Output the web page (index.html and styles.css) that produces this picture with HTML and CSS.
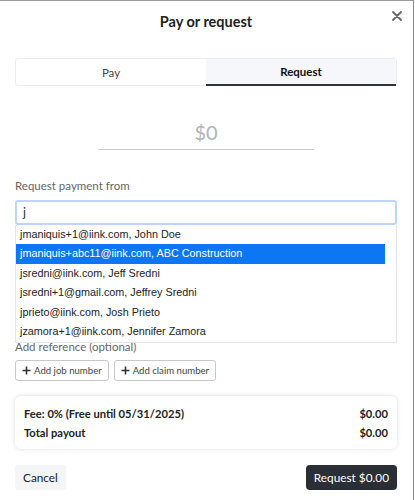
FILE: index.html
```html
<!DOCTYPE html>
<html>
<head>
<meta charset="utf-8">
<link rel="stylesheet" href="styles.css">
</head>
<body>
<div class="modal">
  <header class="head">
    <h1 class="title">Pay or request</h1>
    <button class="close" aria-label="Close">
      <svg width="10" height="10" viewBox="0 0 10 10"><path d="M1 1L9 9M9 1L1 9" stroke="#666" stroke-width="1.8" stroke-linecap="round"/></svg>
    </button>
  </header>
  <div class="tabs">
    <div class="tab">Pay</div>
    <div class="tab active">Request</div>
  </div>
  <div class="amount-wrap">
    <div class="amount">$0</div>
  </div>
  <div class="field">
    <div class="label">Request payment from</div>
    <div class="combo">
      <div class="input">j</div>
      <ul class="list">
        <li>jmaniquis+1@iink.com, John Doe</li>
        <li class="sel">jmaniquis+abc11@iink.com, ABC Construction</li>
        <li>jsredni@iink.com, Jeff Sredni</li>
        <li>jsredni+1@gmail.com, Jeffrey Sredni</li>
        <li>jprieto@iink.com, Josh Prieto</li>
        <li>jzamora+1@iink.com, Jennifer Zamora</li>
      </ul>
    </div>
  </div>
  <div class="ref">
    <div class="label ref-label">Add reference (optional)</div>
    <div class="ref-btns">
      <button class="ref-btn"><svg width="9" height="9" viewBox="0 0 9 9"><path d="M4.5 0.5V8.5M0.5 4.5H8.5" stroke="#333" stroke-width="1.6"/></svg>Add job number</button>
      <button class="ref-btn"><svg width="9" height="9" viewBox="0 0 9 9"><path d="M4.5 0.5V8.5M0.5 4.5H8.5" stroke="#333" stroke-width="1.6"/></svg>Add claim number</button>
    </div>
  </div>
  <div class="card">
    <div class="row"><span>Fee: 0% (Free until 05/31/2025)</span><span>$0.00</span></div>
    <div class="row"><span>Total payout</span><span>$0.00</span></div>
  </div>
  <footer class="foot">
    <button class="btn cancel">Cancel</button>
    <button class="btn primary">Request $0.00</button>
  </footer>
</div>
</body>
</html>
```
FILE: styles.css
```css
* { box-sizing: border-box; }
html, body { margin: 0; padding: 0; background: #fff; }
body { font-family: Lato, "Open Sans", sans-serif; color: #222; }
.modal {
  width: 414px;
  height: 500px;
  border-top: 1px solid #999;
  border-right: 1px solid #8a8a8a;
  padding: 0 16px 0 15px;
  display: flex;
  flex-direction: column;
}
.head { position: relative; height: 57px; display: flex; justify-content: center; }
.title { margin: 12px 0 0; font-size: 14.5px; font-weight: 700; color: #222; line-height: 18px; }
.close {
  position: absolute; right: -7px; top: 8px;
  background: none; border: 0; padding: 2px; cursor: pointer; display: flex;
}
.tabs {
  display: flex; height: 28px;
  border: 1px solid #ececf0; border-radius: 3px;
}
.tab {
  flex: 1; display: flex; align-items: center; justify-content: center;
  font-size: 11.5px; color: #444;
}
.tab.active {
  background: #f6f7fb; color: #111; font-weight: 700;
  border-bottom: 2px solid #333;
  margin-bottom: -1px;
}
.amount-wrap { display: flex; justify-content: center; padding-top: 33px; }
.amount {
  width: 216px; text-align: center;
  font-size: 20px; color: #b3b3b8; line-height: 26px;
  padding-bottom: 4px;
  border-bottom: 1px solid #ccc;
}
.field { margin-top: 28px; }
.label { font-size: 11.5px; color: #666; line-height: 16px; }
.combo { position: relative; margin-top: 6px; }
.input {
  height: 25px; border: 2px solid #bcd5f9; border-radius: 3px;
  padding: 2px 6px; font-size: 12.5px; color: #333; line-height: 17px;
}
.list {
  position: absolute; left: 0; right: 0; top: 25px; z-index: 2;
  margin: 0; padding: 0; list-style: none; background: #fff;
  border: 1px solid #e6e6e6; border-top: 0;
  font-family: "Liberation Sans", Arial, sans-serif; font-size: 10.8px; color: #222;
  height: 118px;
}
.list li { height: 19.4px; line-height: 19.4px; padding-left: 4px; margin-right: 11px; }
.list li.sel { background: #0d76f2; color: #fff; }
.ref { margin-top: 114px; }
.ref-btns { display: flex; gap: 5px; margin-top: 5px; }
.ref-btn {
  display: flex; align-items: center; gap: 3px;
  height: 21px; padding: 0 6px 0 6px;
  background: #fff; border: 1px solid #c9c9c9; border-radius: 3px;
  font-family: inherit; font-size: 9.6px; color: #444;
}
.card {
  margin-top: 15px; border-radius: 6px;
  box-shadow: 0 0 4px rgba(0,0,0,0.15);
  padding: 8px 9px 7px 9px;
}
.row {
  display: flex; justify-content: space-between;
  font-size: 11.2px; font-weight: 700; color: #222; line-height: 19px;
}
.foot { display: flex; justify-content: space-between; margin-top: 16px; }
.btn {
  height: 25px; border: 0; border-radius: 3px;
  font-family: inherit; font-size: 11.8px; padding: 0 8px;
}
.cancel { background: #f4f5f7; color: #222; }
.primary { background: #2a2e35; color: #fff; border-radius: 4px; }
```
